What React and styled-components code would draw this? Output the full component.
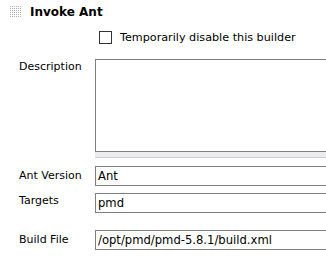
import styled, { createGlobalStyle } from "styled-components";

const GlobalStyle = createGlobalStyle`
  html, body {
    margin: 0;
    padding: 0;
    background: #fff;
    overflow: hidden;
  }
  body {
    font-family: "DejaVu Sans", Verdana, sans-serif;
    font-size: 11px;
    color: #000;
  }
`;

const Builder = styled.section`
  width: 326px;
  height: 257px;
  overflow: hidden;
`;

const Header = styled.div`
  display: flex;
  align-items: center;
  gap: 8px;
  height: 24px;
  padding-left: 10px;
`;

const Title = styled.span`
  font-weight: bold;
  font-size: 12px;
`;

const Form = styled.div`
  display: grid;
  grid-template-columns: 76px 260px;
  padding-left: 19px;
`;

const Label = styled.div`
  padding-top: ${(p) => p.$top || 0}px;
  margin-top: ${(p) => p.$gap || 0}px;
  white-space: nowrap;
`;

const Field = styled.div`
  margin-top: ${(p) => p.$gap || 0}px;
`;

const CheckRow = styled.label`
  display: flex;
  align-items: center;
  gap: 8px;
  margin-top: 7px;
  padding-left: 4px;
  height: 13px;
  font-size: 11.2px;
`;

const Box = styled.span`
  width: 11px;
  height: 11px;
  border: 1px solid #333;
  background: #fff;
`;

const TextArea = styled.div`
  height: 91px;
  border: 1px solid #808080;
  background: #fff;
`;

const Grippie = styled.div`
  height: 5px;
  background: #ececec;
  border-bottom: 1px solid #d9c9ec;
`;

const Input = styled.div`
  height: 18px;
  line-height: 18px;
  border: 1px solid #808080;
  padding-left: 2px;
  font-size: 11.6px;
  white-space: nowrap;
  overflow: hidden;
`;

function Grip() {
  const dots = [];
  for (let r = 0; r < 6; r++) {
    for (let c = 0; c < 6; c++) {
      dots.push(<rect key={`${r}-${c}`} x={c * 2} y={r * 2} width="1" height="1" fill="#aaa" />);
    }
  }
  return (
    <svg width="12" height="12" viewBox="0 0 12 12">
      {dots}
    </svg>
  );
}

export default function App() {
  return (
    <Builder>
      <GlobalStyle />
      <Header>
        <Grip />
        <Title>Invoke Ant</Title>
      </Header>
      <Form>
        <div />
        <CheckRow>
          <Box />
          Temporarily disable this builder
        </CheckRow>

        <Label $gap={15} $top={1}>Description</Label>
        <Field $gap={15}>
          <TextArea />
          <Grippie />
        </Field>

        <Label $gap={8} $top={3}>Ant Version</Label>
        <Field $gap={8}>
          <Input>Ant</Input>
        </Field>

        <Label $gap={7} $top={1}>Targets</Label>
        <Field $gap={7}>
          <Input>pmd</Input>
        </Field>

        <Label $gap={17} $top={3}>Build File</Label>
        <Field $gap={17}>
          <Input>/opt/pmd/pmd-5.8.1/build.xml</Input>
        </Field>
      </Form>
    </Builder>
  );
}
